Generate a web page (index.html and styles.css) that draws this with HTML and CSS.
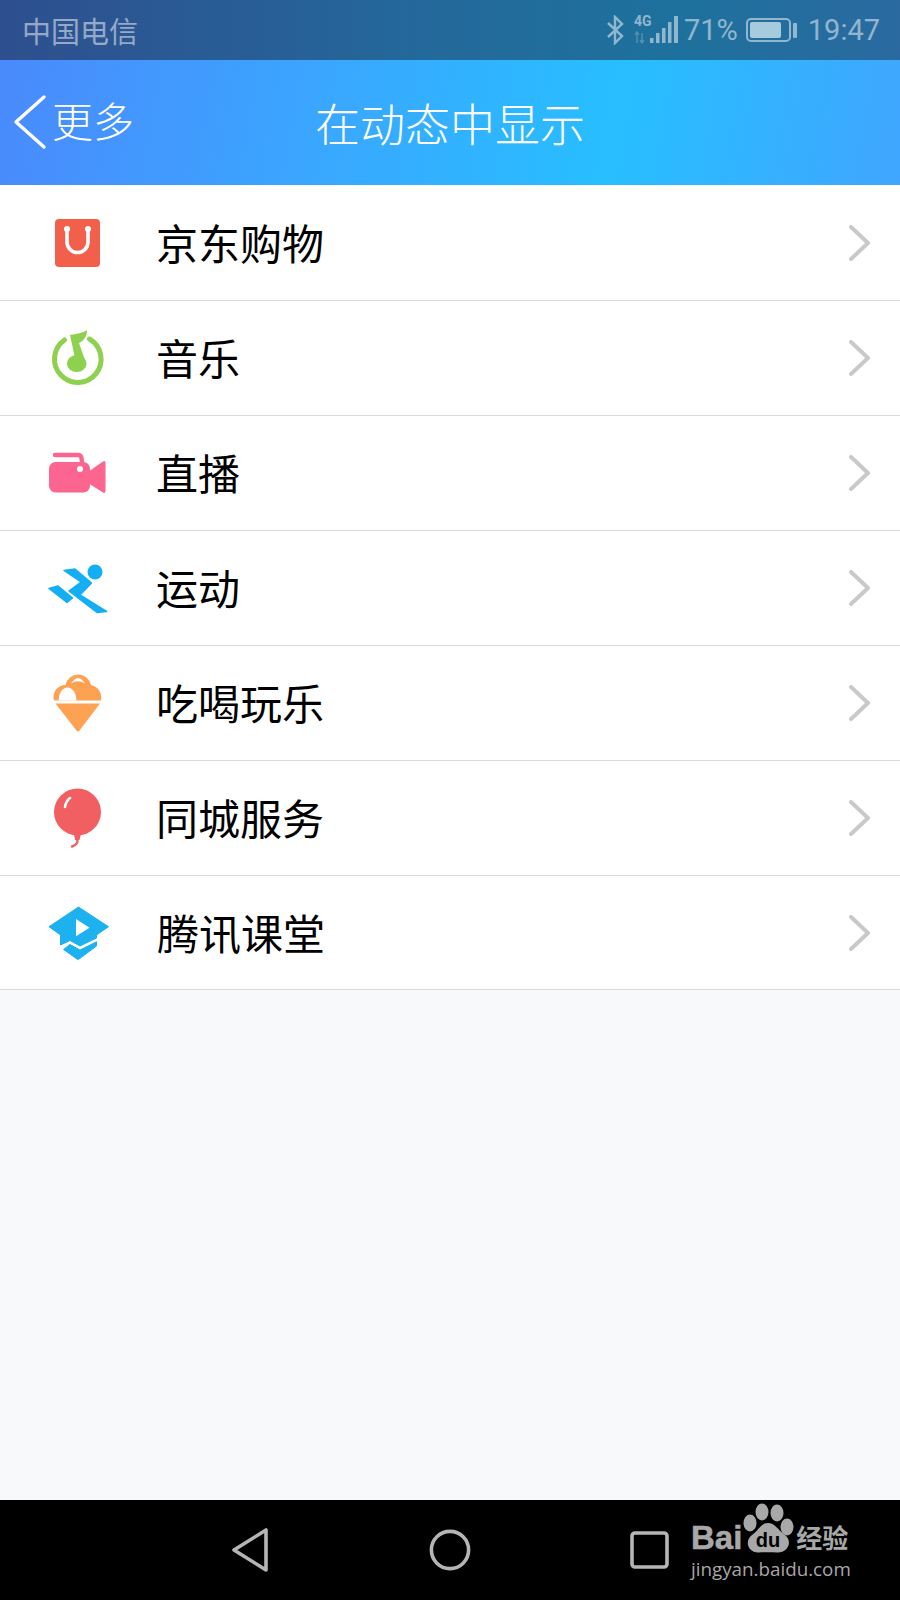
FILE: index.html
```html
<!DOCTYPE html>
<html lang="zh-CN">
    <head>
        <title>在动态中显示</title>
        <meta charset="utf-8">
        <meta name="viewport" content="width=device-width, initial-scale=1">
        <link rel="stylesheet" href="styles.css">
    </head>
    <body>
        <div class="phone">
            <div class="status-bar">
                <span class="carrier">中国电信</span>
                <div class="status-right">
                    <svg class="bt-icon" width="18" height="30" viewBox="0 0 18 30">
                        <path d="M2 8 L16 21 L9 28 V2 L16 9 L2 22" fill="none" stroke="currentColor" stroke-width="2.4"/>
                    </svg>
                    <svg class="signal-icon" width="46" height="32" viewBox="0 0 46 32">
                        <text x="0" y="12" class="net-label">4G</text>
                        <path d="M3 18 V29 M1 21 L3 18 L5 21 M8 29 V19 M6 26 L8 29 L10 26" fill="none" stroke="currentColor" stroke-width="1.3" opacity="0.5"/>
                        <rect x="16" y="24" width="3.5" height="5"/>
                        <rect x="22" y="19" width="3.5" height="10"/>
                        <rect x="28" y="14" width="3.5" height="15"/>
                        <rect x="34" y="8" width="3.5" height="21"/>
                        <rect x="40" y="2" width="4" height="27"/>
                    </svg>
                    <span class="battery-text">71%</span>
                    <div class="battery">
                        <div class="battery-body"><div class="battery-fill"></div></div>
                        <div class="battery-nub"></div>
                    </div>
                    <span class="clock">19:47</span>
                </div>
            </div>

            <div class="title-bar">
                <div class="back">
                    <svg width="34" height="56" viewBox="0 0 34 56">
                        <path d="M31 3 L3 28 L31 53" fill="none" stroke="#fff" stroke-width="3.4" stroke-linecap="round" stroke-linejoin="round"/>
                    </svg>
                    <span class="back-label">更多</span>
                </div>
                <h1>在动态中显示</h1>
            </div>

            <ul class="list">
                <li class="row">
                    <svg class="row-icon" width="60" height="60" viewBox="0 0 60 60">
                        <rect x="7" y="6" width="45" height="48" rx="4" fill="#f2604c"/>
                        <path d="M19 16 V29 a10.5 10.5 0 0 0 21 0 V16" fill="none" stroke="#fff" stroke-width="3.6"/>
                        <circle cx="19" cy="16" r="3" fill="#fff"/>
                        <circle cx="40" cy="16" r="3" fill="#fff"/>
                    </svg>
                    <span class="row-label">京东购物</span>
                    <svg class="chevron" width="24" height="36" viewBox="0 0 24 36"><path d="M3 2 L20 18 L3 34" fill="none" stroke="#c9c9c9" stroke-width="4" stroke-linecap="round" stroke-linejoin="round"/></svg>
                </li>
                <li class="row">
                    <svg class="row-icon" width="60" height="60" viewBox="0 0 60 60">
                        <path d="M16.5 12 A23.3 23.3 0 1 0 41.5 11" fill="none" stroke="#8ed14f" stroke-width="5" stroke-linecap="round"/>
                        <ellipse cx="28.7" cy="35.5" rx="9.8" ry="8.6" fill="#8ed14f"/>
                        <path d="M22 7 C28 6 35 5 39 2 C39 8 36 13 31 15 L38 35 L27 30 Z" fill="#8ed14f"/>
                    </svg>
                    <span class="row-label">音乐</span>
                    <svg class="chevron" width="24" height="36" viewBox="0 0 24 36"><path d="M3 2 L20 18 L3 34" fill="none" stroke="#c9c9c9" stroke-width="4" stroke-linecap="round" stroke-linejoin="round"/></svg>
                </li>
                <li class="row">
                    <svg class="row-icon" width="60" height="60" viewBox="0 0 60 60">
                        <path d="M7 12 H30 q3 0 3.5 3 l0.5 4" fill="none" stroke="#fb6590" stroke-width="4.4" stroke-linecap="round"/>
                        <rect x="1" y="19" width="41" height="30.5" rx="6.5" fill="#fb6590"/>
                        <path d="M40 29 L55 18.5 q2.5 -1.5 2.5 2 V47.5 q0 3.5 -2.5 2 L40 40 Z" fill="#fb6590"/>
                        <circle cx="32" cy="26" r="3" fill="#fff"/>
                    </svg>
                    <span class="row-label">直播</span>
                    <svg class="chevron" width="24" height="36" viewBox="0 0 24 36"><path d="M3 2 L20 18 L3 34" fill="none" stroke="#c9c9c9" stroke-width="4" stroke-linecap="round" stroke-linejoin="round"/></svg>
                </li>
                <li class="row">
                    <svg class="row-icon" width="60" height="60" viewBox="0 0 60 60">
                        <circle cx="47" cy="14" r="7.5" fill="#14aef5"/>
                        <path d="M16 12.5 L27 11 L43.5 25 L32 37 L58.5 53.5 L49 54.5 L21 33 L33 24 Z" fill="#14aef5" stroke="#14aef5" stroke-width="1.5" stroke-linejoin="round"/>
                        <path d="M1 30.5 L10 28 L24.5 40 L19 44.5 Z" fill="#14aef5" stroke="#14aef5" stroke-width="1.5" stroke-linejoin="round"/>
                    </svg>
                    <span class="row-label">运动</span>
                    <svg class="chevron" width="24" height="36" viewBox="0 0 24 36"><path d="M3 2 L20 18 L3 34" fill="none" stroke="#c9c9c9" stroke-width="4" stroke-linecap="round" stroke-linejoin="round"/></svg>
                </li>
                <li class="row">
                    <svg class="row-icon" width="60" height="60" viewBox="0 0 60 60">
                        <path d="M6 27.5 A12 12 0 0 1 17.5 12 A13 13 0 0 1 43 12 A13 13 0 0 1 53 27.5 Z" fill="#fda253"/>
                        <path d="M10.5 27.5 A9 13 0 0 1 28.5 27.5 Z" fill="#fff"/>
                        <path d="M23 10.5 Q30 0 37 10.5 Q30 6 23 10.5 Z" fill="#fff"/>
                        <path d="M7.5 30.5 H52 L31.5 57.5 Q30 59.5 28.5 57.5 Z" fill="#fda253"/>
                    </svg>
                    <span class="row-label">吃喝玩乐</span>
                    <svg class="chevron" width="24" height="36" viewBox="0 0 24 36"><path d="M3 2 L20 18 L3 34" fill="none" stroke="#c9c9c9" stroke-width="4" stroke-linecap="round" stroke-linejoin="round"/></svg>
                </li>
                <li class="row">
                    <svg class="row-icon" width="60" height="60" viewBox="0 0 60 60">
                        <circle cx="29.5" cy="24" r="23.5" fill="#f15f63"/>
                        <path d="M26 46 L33 46 L31.5 52 L27 52 Z" fill="#f15f63"/>
                        <path d="M29 51 Q31 56 24 58.5" fill="none" stroke="#f15f63" stroke-width="2.4" stroke-linecap="round"/>
                        <path d="M17 19 Q18 13 22 10" fill="none" stroke="#fff" stroke-width="2.6" stroke-linecap="round"/>
                    </svg>
                    <span class="row-label">同城服务</span>
                    <svg class="chevron" width="24" height="36" viewBox="0 0 24 36"><path d="M3 2 L20 18 L3 34" fill="none" stroke="#c9c9c9" stroke-width="4" stroke-linecap="round" stroke-linejoin="round"/></svg>
                </li>
                <li class="row">
                    <svg class="row-icon" width="62" height="60" viewBox="0 0 62 60">
                        <path d="M1 23.7 L30.5 4 L60.5 23.7 L48.5 32 V35 L32 43 L22 37.5 L12.5 42 V32 Z" fill="#1db1ef" stroke="#1db1ef" stroke-width="1" stroke-linejoin="round"/>
                        <path d="M15.5 46.5 L22 41.5 L32 47 L48.5 38.8 V43 L31 56 Q30 56.8 29 56 Z" fill="#1db1ef" stroke="#1db1ef" stroke-width="1" stroke-linejoin="round"/>
                        <path d="M28 16 V33.3 L41.5 24.7 Z" fill="#fff"/>
                    </svg>
                    <span class="row-label">腾讯课堂</span>
                    <svg class="chevron" width="24" height="36" viewBox="0 0 24 36"><path d="M3 2 L20 18 L3 34" fill="none" stroke="#c9c9c9" stroke-width="4" stroke-linecap="round" stroke-linejoin="round"/></svg>
                </li>
            </ul>

            <div class="filler"></div>

            <div class="nav-bar">
                <div class="nav-slot">
                    <svg width="44" height="46" viewBox="0 0 44 46"><path d="M6 23 L38 3 V43 Z" fill="none" stroke="#b5b5b5" stroke-width="3.6" stroke-linejoin="round"/></svg>
                </div>
                <div class="nav-slot">
                    <svg width="44" height="46" viewBox="0 0 44 46"><circle cx="22" cy="23" r="18.6" fill="none" stroke="#b5b5b5" stroke-width="3.6"/></svg>
                </div>
                <div class="nav-slot">
                    <svg width="44" height="46" viewBox="0 0 44 46"><rect x="4" y="6" width="35" height="34" rx="3" fill="none" stroke="#b5b5b5" stroke-width="3.6"/></svg>
                </div>
                <div class="watermark">
                    <div class="wm-top">
                        <span class="wm-bai">Bai</span>
                        <svg class="wm-paw" width="52" height="50" viewBox="0 0 52 50">
                            <ellipse cx="20" cy="9" rx="6.5" ry="8.5" fill="#a8a8a8"/>
                            <ellipse cx="35" cy="10" rx="6.5" ry="8.5" fill="#a8a8a8"/>
                            <ellipse cx="8" cy="20" rx="6.5" ry="8.5" fill="#a8a8a8"/>
                            <ellipse cx="45" cy="24" rx="6.5" ry="8.5" fill="#a8a8a8"/>
                            <path d="M26 20 C33 20 36 27 43 32 C51 38 46 50 35 49.5 C29 49 23 49 17 49.5 C6 50 2 38 10 32 C17 27 19 20 26 20 Z" fill="#a8a8a8"/>
                            <text x="26" y="44" class="wm-du">du</text>
                        </svg>
                        <span class="wm-cn">经验</span>
                    </div>
                    <div class="wm-url">jingyan.baidu.com</div>
                </div>
            </div>
        </div>
    </body>
</html>
```

FILE: styles.css
```css
* {
    box-sizing: border-box;
}
body {
    margin: 0;
    background: #f8f9fb;
    font-family: "Noto Sans CJK SC", "Noto Sans", sans-serif;
}
.phone {
    position: relative;
    width: 900px;
    height: 1600px;
    display: flex;
    flex-direction: column;
    overflow: hidden;
}

/* status bar */
.status-bar {
    height: 60px;
    display: flex;
    align-items: center;
    justify-content: space-between;
    padding: 0 20px 0 22px;
    background: linear-gradient(90deg, #2e4f8f 0%, #236a9b 50%, #1e719d 75%, #2a6aa0 100%);
    color: rgba(255, 255, 255, 0.5);
}
.carrier {
    font-size: 29px;
    line-height: 60px;
}
.status-right {
    display: flex;
    align-items: center;
    height: 60px;
}
.bt-icon {
    margin-right: 10px;
}
.signal-icon {
    fill: currentColor;
}
.net-label {
    font-family: "Roboto", sans-serif;
    font-size: 14px;
    font-weight: 700;
}
.battery-text, .clock {
    font-family: "Roboto", sans-serif;
    font-size: 29px;
}
.battery-text {
    margin-left: 4px;
}
.battery {
    display: flex;
    align-items: center;
    margin-left: 8px;
}
.battery-body {
    width: 45px;
    height: 24px;
    border: 2px solid rgba(255, 255, 255, 0.5);
    border-radius: 5px;
    padding: 2px;
}
.battery-fill {
    width: 31px;
    height: 100%;
    background: #a6cbdd;
    border-radius: 2px;
}
.battery-nub {
    width: 4px;
    height: 15px;
    margin-left: 2px;
    background: rgba(255, 255, 255, 0.5);
    border-radius: 1px;
}
.clock {
    margin-left: 11px;
}

/* title bar */
.title-bar {
    position: relative;
    height: 125px;
    display: flex;
    align-items: center;
    justify-content: center;
    background: linear-gradient(100deg, #4a8afc 0%, #38aaff 40%, #27beff 68%, #40a6ff 100%);
    color: #fff;
}
.title-bar h1 {
    margin: 0;
    font-size: 45px;
    font-weight: 300;
    line-height: 125px;
}
.back {
    position: absolute;
    left: 13px;
    top: 31px;
    display: flex;
    align-items: center;
    gap: 5px;
    font-size: 41px;
    font-weight: 300;
    line-height: 56px;
}
.back-label {
    padding-bottom: 6px;
}

/* list */
.list {
    margin: 0;
    padding: 0;
    list-style: none;
    background: #fff;
}
.row {
    height: 115px;
    display: flex;
    align-items: center;
    padding: 0 28px 0 48px;
    border-bottom: 1px solid #d9d9d9;
}
.row:first-child {
    height: 116px;
}
.row:last-child {
    height: 114px;
}
.row-icon {
    flex: none;
    margin-right: 48px;
}
.row-label {
    flex: 1;
    font-size: 42px;
    color: #000;
    padding-bottom: 3px;
}
.row:last-child .row-icon {
    margin-right: 47px;
}
.chevron {
    flex: none;
}
.filler {
    flex: 1;
    background: #f8f9fb;
}

/* bottom nav */
.nav-bar {
    position: relative;
    height: 100px;
    display: flex;
    align-items: center;
    justify-content: center;
    background: #000;
}
.nav-slot {
    width: 200px;
    display: flex;
    justify-content: center;
}
.watermark {
    position: absolute;
    left: 691px;
    top: 3px;
    color: #a8a8a8;
}
.wm-top {
    display: flex;
    align-items: flex-end;
    height: 50px;
}
.wm-bai {
    font-family: "Liberation Sans", sans-serif;
    font-size: 33px;
    font-weight: 700;
    line-height: 34px;
    margin-bottom: -2px;
    -webkit-text-stroke: 0.5px #a8a8a8;
}
.wm-cn {
    font-size: 26px;
    font-weight: 700;
    line-height: 30px;
    margin: 0 0 1px 2px;
}
.wm-du {
    font-family: "Liberation Sans", sans-serif;
    font-size: 20px;
    font-weight: 700;
    text-anchor: middle;
    fill: #000;
}
.wm-url {
    font-family: "Open Sans", sans-serif;
    font-size: 18.8px;
    line-height: 24px;
    margin-top: 4px;
    white-space: nowrap;
}
```
